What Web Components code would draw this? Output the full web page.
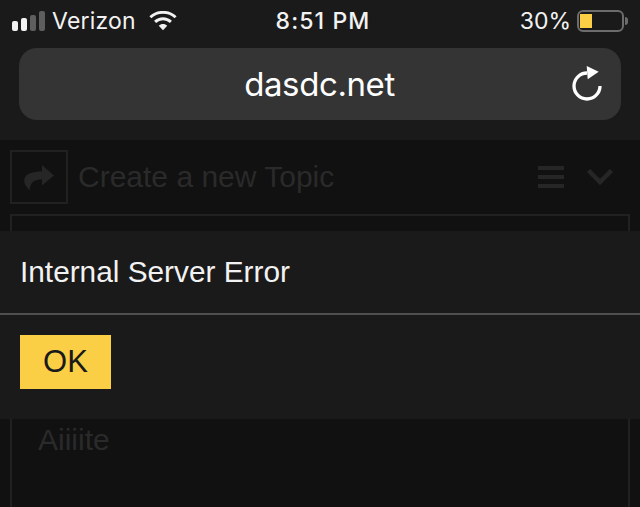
<!DOCTYPE html>
<html>
<head>
<meta charset="utf-8">
<title>dasdc.net</title>
<style>
    html, body { margin: 0; padding: 0; height: 100%; overflow: hidden; background: #111; }
    body { font-family: "Liberation Sans", sans-serif; }
</style>
</head>
<body>
<browser-chrome url="dasdc.net"></browser-chrome>
<topic-page heading="Create a new Topic">Aiiiite</topic-page>
<error-dialog message="Internal Server Error"></error-dialog>

<script>
class StatusBar extends HTMLElement {
    constructor() {
        super();
        this.myRoot = this.attachShadow({ mode: "open" });
        this.myRoot.innerHTML = `
        <style>
            :host { display: grid; grid-template-columns: 1fr auto 1fr; align-items: center; height: 42px; padding: 0 12px 0 12px;
                    color: #f2f2f2; font: 400 23px Inter, "Noto Sans", sans-serif; }
            .left { display: flex; align-items: center; }
            .right { display: flex; align-items: center; justify-content: end; }
            .bars { display: flex; align-items: flex-end; gap: 3px; height: 20px; }
            .bars i { width: 6px; border-radius: 2px; background: #f2f2f2; }
            .bars i.off { background: #5e5e5e; }
            .carrier { margin-left: 7px; letter-spacing: .2px; }
            .wifi { margin-left: 13px; }
            .time { font-weight: 500; letter-spacing: 1.1px; margin-left: 6px; }
            .battery { display: flex; align-items: center; margin-left: 6px; }
            .shell { width: 47px; height: 22px; box-sizing: border-box; border: 2px solid #6c6c6c; border-radius: 6px; padding: 2px 1px; }
            .level { width: 12px; height: 100%; background: #facf46; }
            .nub { width: 3px; height: 8px; margin-left: 1px; background: #6c6c6c; border-radius: 0 3px 3px 0; }
        </style>
        <div class="left">
            <div class="bars"><i style="height:10px"></i><i style="height:13px"></i><i class="off" style="height:16px"></i><i class="off" style="height:20px"></i></div>
            <span class="carrier">Verizon</span>
            <svg class="wifi" width="28" height="20" viewBox="0 0 30 21">
                <path d="M1.500 6.500C9 -.5 21 -.5 28.500 6.500" fill="none" stroke="#f2f2f2" stroke-width="3.200"/>
                <path d="M6.500 11.500C11.500 7 18.500 7 23.500 11.500" fill="none" stroke="#f2f2f2" stroke-width="3.200"/>
                <path d="M10.500 15.500L15 20.500L19.500 15.500C17 13 13 13 10.500 15.500Z" fill="#f2f2f2"/>
            </svg>
        </div>
        <span class="time">8:51 PM</span>
        <div class="right">
            <span>30%</span>
            <div class="battery"><div class="shell"><div class="level"></div></div><div class="nub"></div></div>
        </div>
        `;
    }
}

class BrowserChrome extends HTMLElement {
    constructor() {
        super();
        this.myRoot = this.attachShadow({ mode: "open" });
        this.myRoot.innerHTML = `
        <style>
            :host { display: block; height: 140px; background: #1a1a1a; }
            .wrap { padding: 6px 19px 0; }
            .url { height: 72px; border-radius: 18px; background: #343434; display: flex; align-items: center; justify-content: center;
                   position: relative; color: #fff; font: 400 33px Inter, "Noto Sans", sans-serif; letter-spacing: -.4px; }
            #u { margin-left: -1px; }
            svg { position: absolute; right: 17px; top: 17px; }
        </style>
        <status-bar></status-bar>
        <div class="wrap">
            <div class="url"><span id="u"></span>
                <svg width="34" height="38" viewBox="0 0 34 38">
                    <path d="M17 8A13 13 0 1 0 30 21" fill="none" stroke="#fff" stroke-width="3.300"/>
                    <path d="M16.700 1L28.700 6.700L17.700 14.300Z" fill="#fff"/>
                </svg>
            </div>
        </div>
        `;
    }

    connectedCallback() {
        this.myRoot.getElementById("u").textContent = this.getAttribute("url");
    }
}

class TopicPage extends HTMLElement {
    constructor() {
        super();
        this.myRoot = this.attachShadow({ mode: "open" });
        this.myRoot.innerHTML = `
        <style>
            :host { display: block; padding: 10px 10px 0; color: #2a2a2a; font-family: "Liberation Sans", sans-serif; }
            header { display: flex; align-items: center; height: 54px; }
            .share { width: 58px; height: 54px; box-sizing: border-box; border: 2px solid #212121; display: flex; align-items: center; justify-content: center; }
            h1 { margin: 0 0 0 10px; flex: 1; font-size: 30px; font-weight: 400; line-height: 56px; }
            .menu { width: 26px; height: 22px; display: flex; flex-direction: column; justify-content: space-between; margin-right: 22px; }
            .menu i { height: 4px; background: #262626; }
            .editor { margin-top: 10px; height: 293px; box-sizing: border-box; border: 2px solid #212121; border-bottom: 0; padding: 206px 26px 0; font-size: 30px; line-height: 36px; }
            .chev { margin-right: 16px; }
        </style>
        <header>
            <div class="share">
                <svg width="32" height="27" viewBox="0 0 32 27"><path d="M19 1L31 11.500L19 21.500V15.500C11 15.500 7.500 18 6.500 26.500C2.500 22 .5 18 1.500 14.500C3 9.500 10 7.500 19 7.500Z" fill="#262626"/></svg>
            </div>
            <h1 id="h"></h1>
            <div class="menu"><i></i><i></i><i></i></div>
            <svg class="chev" width="28" height="18" viewBox="0 0 28 18"><path d="M2.500 2.500L14 14L25.500 2.500" fill="none" stroke="#262626" stroke-width="4.500"/></svg>
        </header>
        <div class="editor"><slot></slot></div>
        `;
    }

    connectedCallback() {
        this.myRoot.getElementById("h").textContent = this.getAttribute("heading");
    }
}

class ErrorDialog extends HTMLElement {
    constructor() {
        super();
        this.myRoot = this.attachShadow({ mode: "open" });
        this.myRoot.innerHTML = `
        <style>
            :host { display: block; position: absolute; left: 0; right: 0; top: 231px; height: 188px; background: #1a1a1a; color: #f2f2f2;
                    font-family: "Liberation Sans", sans-serif; }
            .msg { height: 84px; box-sizing: border-box; padding-left: 20px; display: flex; align-items: center; font-size: 29.800px; border-bottom: 2px solid #4f4f4f; }
            .actions { padding: 20px 20px 0; }
            button { display: block; width: 91px; height: 54px; padding: 0; border: 0; background: #facf46; color: #1a1a1a; font: 400 31px "Liberation Sans", sans-serif; }
        </style>
        <div class="msg" id="m"></div>
        <div class="actions"><button>OK</button></div>
        `;
    }

    connectedCallback() {
        this.myRoot.getElementById("m").textContent = this.getAttribute("message");
        this.myRoot.querySelector("button").addEventListener("click", () => {
            this.style.display = "none";
        });
    }
}

window.customElements.define("status-bar", StatusBar);
window.customElements.define("browser-chrome", BrowserChrome);
window.customElements.define("topic-page", TopicPage);
window.customElements.define("error-dialog", ErrorDialog);
</script>
</body>
</html>
